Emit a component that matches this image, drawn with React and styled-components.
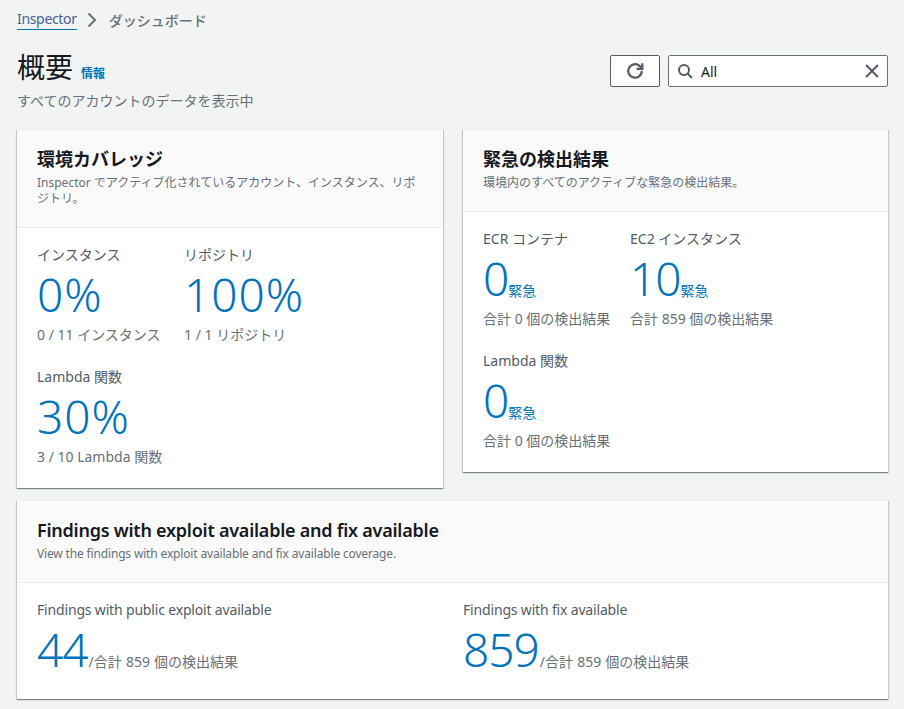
import React from "react";
import styled, { createGlobalStyle } from "styled-components";

const Global = createGlobalStyle`
  html, body { margin: 0; padding: 0; background: #f2f3f3; }
  body {
    font-family: "Noto Sans", "Noto Sans CJK JP", sans-serif;
    color: #16191f;
  }
`;

const Page = styled.div`
  width: 904px;
  height: 709px;
  box-sizing: border-box;
  padding: 9px 16px 0 17px;
  overflow: hidden;
`;

const Breadcrumbs = styled.nav`
  display: flex;
  align-items: center;
  height: 21px;
  font-size: 14px;
  font-weight: 500;
  color: #687078;
`;

const CrumbLink = styled.a`
  line-height: 20px;
  font-weight: 400;
  letter-spacing: -0.33px;
  border-bottom: 1px solid #0073bb;
  color: #44639a;
`;

const CrumbSep = styled.svg`
  width: 16px;
  height: 16px;
  margin: 0 9px 0 7px;
  fill: none;
  stroke: #687078;
  stroke-width: 2;
`;

const PageHeader = styled.header`
  display: flex;
  justify-content: space-between;
  align-items: flex-start;
  margin-top: 18px;
  height: 81px;
`;

const TitleRow = styled.div`
  display: flex;
  align-items: baseline;
  gap: 8px;
`;

const Title = styled.h1`
  margin: 0;
  font-size: 28px;
  font-weight: 400;
  line-height: 38px;
  color: #16191f;
`;

const InfoLink = styled.a`
  font-size: 12px;
  font-weight: 700;
  color: #0073bb;
`;

const Subtitle = styled.p`
  margin: 5px 0 0;
  font-size: 14px;
  line-height: 20px;
  color: #687078;
`;

const Controls = styled.div`
  display: flex;
  gap: 8px;
  margin-top: 7px;
`;

const RefreshButton = styled.button`
  width: 50px;
  height: 32px;
  padding: 0;
  display: flex;
  align-items: center;
  justify-content: center;
  background: #fff;
  border: 1px solid #545b64;
  border-radius: 2px;
`;

const SearchBox = styled.div`
  width: 220px;
  height: 32px;
  box-sizing: border-box;
  display: flex;
  align-items: center;
  padding: 0 7px 0 8px;
  background: #fff;
  border: 1px solid #687078;
  border-radius: 2px;
  font-size: 14px;
`;

const SearchText = styled.span`
  flex: 1;
  margin-left: 8px;
  color: #16191f;
`;

const IconSvg = styled.svg`
  width: ${(p) => p.$size || 16}px;
  height: ${(p) => p.$size || 16}px;
  fill: none;
  stroke: #545b64;
  stroke-width: 2;
  flex: none;
`;

const Grid = styled.div`
  display: grid;
  grid-template-columns: 426px 425px;
  column-gap: 20px;
  row-gap: 12px;
  align-items: start;
`;

const Card = styled.section`
  background: #fff;
  box-shadow: 0 1px 1px 0 rgba(0, 28, 36, 0.3), 1px 1px 1px 0 rgba(0, 28, 36, 0.15),
    -1px 1px 1px 0 rgba(0, 28, 36, 0.15);
  border-top: 1px solid #eaeded;
  grid-column: ${(p) => (p.$wide ? "1 / -1" : "auto")};
`;

const CardHeader = styled.div`
  box-sizing: border-box;
  height: ${(p) => p.$height}px;
  padding: 17px 20px 0;
  background: #fafafa;
  border-bottom: 1px solid #eaeded;
`;

const CardTitle = styled.h2`
  margin: 0;
  font-size: 18px;
  line-height: 24px;
  font-weight: 600;
  letter-spacing: ${(p) => (p.$latin ? "-0.24px" : "0")};
  color: #16191f;
`;

const CardDesc = styled.p`
  margin: 4px 0 0;
  font-size: 12px;
  line-height: 16px;
  letter-spacing: ${(p) => (p.$latin ? "-0.16px" : "0")};
  color: #687078;
`;

const CardBody = styled.div`
  padding: ${(p) => p.$top}px 20px ${(p) => p.$bottom}px;
  display: grid;
  grid-template-columns: ${(p) => p.$cols};
  row-gap: ${(p) => p.$gap}px;
`;

const Metric = styled.div`
  display: flex;
  flex-direction: column;
`;

const MetricLabel = styled.div`
  font-size: 14px;
  line-height: 20px;
  letter-spacing: ${(p) => (p.$latin ? "-0.17px" : "0")};
  color: #545b64;
`;

const ValueRow = styled.div`
  display: flex;
  align-items: baseline;
  margin-top: 4px;
`;

const BigValue = styled.span`
  font-size: 46px;
  line-height: 50px;
  font-weight: 300;
  letter-spacing: ${(p) => (p.$tight ? "-1px" : "1px")};
  color: #0073bb;
`;

const Unit = styled.a`
  font-size: 14px;
  color: #0073bb;
`;

const AfterValue = styled.span`
  margin-left: 1px;
  font-size: 14px;
  word-spacing: 0.5px;
  color: #687078;
`;

const MetricNote = styled.div`
  margin-top: 6px;
  font-size: 14px;
  line-height: 20px;
  color: #687078;
`;

const Refresh = () => (
  <IconSvg viewBox="0 0 16 16" $size={18}>
    <path d="M14 8a6 6 0 1 1-2-4.5L14 5.5" />
    <path d="M14.5 1v5h-5" />
  </IconSvg>
);

const Search = () => (
  <IconSvg viewBox="0 0 16 16">
    <circle cx="7" cy="7" r="5" />
    <path d="M10.5 10.5L15 15" />
  </IconSvg>
);

const Close = () => (
  <IconSvg viewBox="0 0 16 16">
    <path d="M2 2l12 12M14 2L2 14" />
  </IconSvg>
);

export default function App() {
  return (
    <Page>
      <Global />
      <Breadcrumbs>
        <CrumbLink>Inspector</CrumbLink>
        <CrumbSep viewBox="0 0 16 16">
          <path d="M4.5 1.5L11 8l-6.5 6.5" />
        </CrumbSep>
        <span>ダッシュボード</span>
      </Breadcrumbs>
      <PageHeader>
        <div>
          <TitleRow>
            <Title>概要</Title>
            <InfoLink>情報</InfoLink>
          </TitleRow>
          <Subtitle>すべてのアカウントのデータを表示中</Subtitle>
        </div>
        <Controls>
          <RefreshButton>
            <Refresh />
          </RefreshButton>
          <SearchBox>
            <Search />
            <SearchText>All</SearchText>
            <Close />
          </SearchBox>
        </Controls>
      </PageHeader>
      <Grid>
        <Card>
          <CardHeader $height={98}>
            <CardTitle>環境カバレッジ</CardTitle>
            <CardDesc>
              Inspector でアクティブ化されているアカウント、インスタンス、リポジトリ。
            </CardDesc>
          </CardHeader>
          <CardBody $top={17} $bottom={21} $cols="147px 1fr" $gap={22}>
            <Metric>
              <MetricLabel>インスタンス</MetricLabel>
              <ValueRow>
                <BigValue>0%</BigValue>
              </ValueRow>
              <MetricNote>0 / 11 インスタンス</MetricNote>
            </Metric>
            <Metric>
              <MetricLabel>リポジトリ</MetricLabel>
              <ValueRow>
                <BigValue>100%</BigValue>
              </ValueRow>
              <MetricNote>1 / 1 リポジトリ</MetricNote>
            </Metric>
            <Metric>
              <MetricLabel>Lambda 関数</MetricLabel>
              <ValueRow>
                <BigValue>30%</BigValue>
              </ValueRow>
              <MetricNote>3 / 10 Lambda 関数</MetricNote>
            </Metric>
          </CardBody>
        </Card>
        <Card>
          <CardHeader $height={82}>
            <CardTitle>緊急の検出結果</CardTitle>
            <CardDesc>環境内のすべてのアクティブな緊急の検出結果。</CardDesc>
          </CardHeader>
          <CardBody $top={17} $bottom={21} $cols="147px 1fr" $gap={22}>
            <Metric>
              <MetricLabel>ECR コンテナ</MetricLabel>
              <ValueRow>
                <BigValue $tight>0</BigValue>
                <Unit>緊急</Unit>
              </ValueRow>
              <MetricNote>合計 0 個の検出結果</MetricNote>
            </Metric>
            <Metric>
              <MetricLabel>EC2 インスタンス</MetricLabel>
              <ValueRow>
                <BigValue $tight>10</BigValue>
                <Unit>緊急</Unit>
              </ValueRow>
              <MetricNote>合計 859 個の検出結果</MetricNote>
            </Metric>
            <Metric>
              <MetricLabel>Lambda 関数</MetricLabel>
              <ValueRow>
                <BigValue $tight>0</BigValue>
                <Unit>緊急</Unit>
              </ValueRow>
              <MetricNote>合計 0 個の検出結果</MetricNote>
            </Metric>
          </CardBody>
        </Card>
        <Card $wide>
          <CardHeader $height={82}>
            <CardTitle $latin>Findings with exploit available and fix available</CardTitle>
            <CardDesc $latin>View the findings with exploit available and fix available coverage.</CardDesc>
          </CardHeader>
          <CardBody $top={17} $bottom={25} $cols="426px 1fr" $gap={0}>
            <Metric>
              <MetricLabel $latin>Findings with public exploit available</MetricLabel>
              <ValueRow>
                <BigValue $tight>44</BigValue>
                <AfterValue>/合計 859 個の検出結果</AfterValue>
              </ValueRow>
            </Metric>
            <Metric>
              <MetricLabel $latin>Findings with fix available</MetricLabel>
              <ValueRow>
                <BigValue $tight>859</BigValue>
                <AfterValue>/合計 859 個の検出結果</AfterValue>
              </ValueRow>
            </Metric>
          </CardBody>
        </Card>
      </Grid>
    </Page>
  );
}
